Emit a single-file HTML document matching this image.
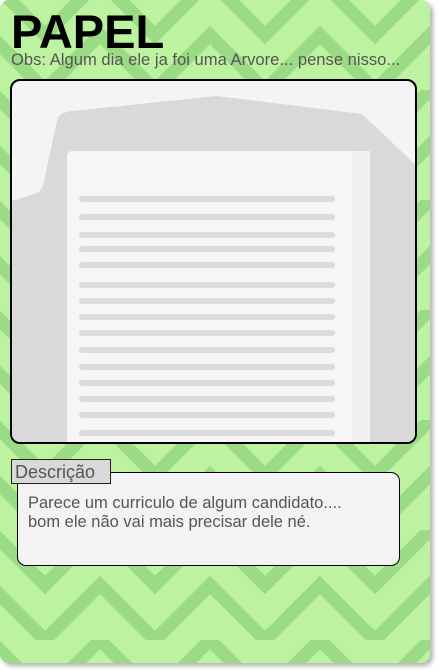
<!DOCTYPE html>
<html><head><style>
*{margin:0;padding:0;box-sizing:border-box}
body{width:439px;height:670px;background:#fff;position:relative;overflow:hidden;font-family:"Liberation Sans",sans-serif}
.card{position:absolute;left:0;top:0;width:430px;height:663px;border-radius:9px;overflow:hidden;box-shadow:3px 3px 5px rgba(0,0,0,.3);background:#bdf2a0;}
.t{position:absolute;left:11px;top:4px;font-size:47px;font-weight:bold;color:#000}
.obs{position:absolute;left:11px;top:50px;font-size:16.6px;color:#555;white-space:nowrap}
.img{position:absolute;left:10px;top:79px;width:407px;height:365px;border:2px solid #000;border-radius:10px;background:#f4f4f4;overflow:hidden}
.line{position:absolute;left:67px;width:256px;height:6px;border-radius:3px;background:#dcdcdc}
.lab{position:absolute;left:11px;top:459px;width:100px;height:25px;background:#d9d9d9;border:1px solid #222;font-size:18px;color:#555;padding-left:3px;line-height:24px;z-index:2}
.box{position:absolute;left:17px;top:472px;width:383px;height:94px;border:1px solid #000;border-radius:9px;background:#f3f3f3;font-size:16.5px;color:#555;padding:21px 10px;line-height:19px;white-space:nowrap}
</style></head><body>
<div class="card">
<svg width="430" height="663" style="position:absolute;left:0;top:0">
<defs><pattern id="p" width="110" height="110" patternUnits="userSpaceOnUse" x="-10" y="-20">
<g stroke="#9bdb86" stroke-width="13" fill="none" stroke-linecap="square">
<path d="M0 0 L55 55 L110 0 M0 55 L55 110 L110 55"/>
</g></pattern></defs>
<rect width="430" height="663" fill="url(#p)"/>
</svg>
<div class="t">PAPEL</div>
<div class="obs">Obs: Algum dia ele ja foi uma Arvore... pense nisso...</div>
<div class="img">
<svg width="407" height="365" style="position:absolute;left:0;top:0"><path d="M45 40 Q45 32 60 30 L205 15 L350 33 L410 90 L410 365 L0 365 L0 120 L25 112 Q32 108 33 95 Z" fill="#d9d9d9"/>
<rect x="55" y="70" width="303" height="300" rx="5" fill="#f6f6f6"/><rect x="340" y="70" width="18" height="300" fill="#f0f0f0"/></svg>
<div class="line" style="top:115px"></div><div class="line" style="top:133px"></div><div class="line" style="top:151px"></div><div class="line" style="top:165px"></div><div class="line" style="top:181px"></div><div class="line" style="top:201px"></div><div class="line" style="top:217px"></div><div class="line" style="top:233px"></div><div class="line" style="top:249px"></div><div class="line" style="top:266px"></div><div class="line" style="top:283px"></div><div class="line" style="top:299px"></div><div class="line" style="top:315px"></div><div class="line" style="top:331px"></div><div class="line" style="top:349px"></div>
</div>
<div class="lab">Descrição</div>
<div class="box">Parece um curriculo de algum candidato....<br>bom ele não vai mais precisar dele né.</div>
</div>
</body></html>
